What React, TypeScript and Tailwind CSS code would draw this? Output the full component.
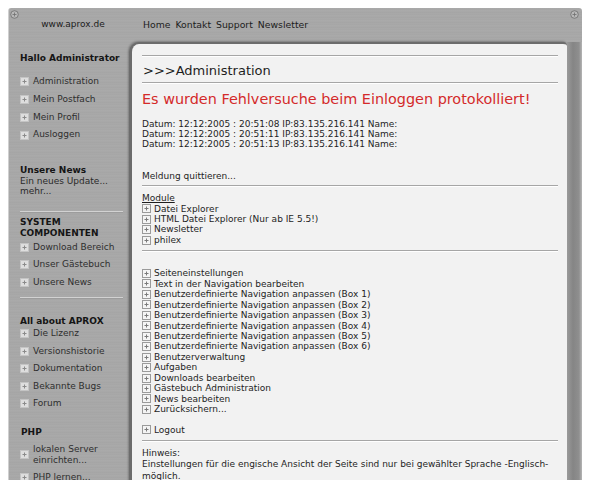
import React from 'react';

const metal =
  'bg-[repeating-linear-gradient(0deg,#a8a8a8_0px,#a3a3a3_1px,#adadad_2px,#a6a6a6_3px,#a9a9a9_5px)]';

function Plus({ side }: { side?: boolean }) {
  return (
    <svg width="9" height="9" viewBox="0 0 9 9" className="shrink-0">
      <rect
        x="0.5"
        y="0.5"
        width="8"
        height="8"
        fill={side ? '#dedede' : '#f4f4f4'}
        stroke={side ? '#c4c4c4' : '#9a9a9a'}
      />
      <path d="M4.5 2.5v4M2.5 4.5h4" stroke={side ? '#8a8a8a' : '#7a7a7a'} strokeWidth="1" />
    </svg>
  );
}

function Screw() {
  return (
    <svg width="9" height="9" viewBox="0 0 9 9">
      <circle cx="4.5" cy="4.5" r="3.8" fill="#b8b8b8" stroke="#6f6f6f" strokeWidth="0.8" />
      <path d="M4.5 2.5v4M2.5 4.5h4" stroke="#6f6f6f" strokeWidth="0.8" />
    </svg>
  );
}

function SideItem({ children, className }: { children: React.ReactNode; className?: string }) {
  return (
    <div className={`flex items-center gap-[4px] py-[3.25px] leading-[11px] text-[#2e2e2e] ${className ?? ''}`}>
      <Plus side />
      <span className="leading-[11px]">{children}</span>
    </div>
  );
}

function SideHead({ children, className }: { children: React.ReactNode; className?: string }) {
  return <div className={`font-bold leading-[11px] text-[#151515] ${className ?? ''}`}>{children}</div>;
}

function Sep({ className }: { className?: string }) {
  return <div className={`h-[2px] w-[103px] border-t border-[#d2d2d2] border-b border-b-[#9c9c9c] ${className ?? ''}`} />;
}

const adminLinks = [
  'Seiteneinstellungen',
  'Text in der Navigation bearbeiten',
  'Benutzerdefinierte Navigation anpassen (Box 1)',
  'Benutzerdefinierte Navigation anpassen (Box 2)',
  'Benutzerdefinierte Navigation anpassen (Box 3)',
  'Benutzerdefinierte Navigation anpassen (Box 4)',
  'Benutzerdefinierte Navigation anpassen (Box 5)',
  'Benutzerdefinierte Navigation anpassen (Box 6)',
  'Benutzerverwaltung',
  'Aufgaben',
  'Downloads bearbeiten',
  'Gästebuch Administration',
  'News bearbeiten',
  'Zurücksichern...',
];

const modules = ['Datei Explorer', 'HTML Datei Explorer (Nur ab IE 5.5!)', 'Newsletter', 'philex'];

function Row({ children }: { children: React.ReactNode }) {
  return (
    <div className="flex items-center gap-[3px] h-[10.46px] leading-[10.46px]">
      <Plus />
      <span>{children}</span>
    </div>
  );
}

function Hr({ className }: { className?: string }) {
  return <div className={`h-[2px] border-t border-[#a6a6a6] border-b border-b-[#ffffff] ${className ?? ''}`} />;
}

export default function App() {
  return (
    <div className="w-[590px] h-[480px] bg-white overflow-hidden pt-[8px] pl-[8px] font-['DejaVu_Sans','Verdana',sans-serif] text-[9px]">
      <div className={`relative w-[574px] h-[520px] rounded-tl-[3px] rounded-tr-[3px] border-l border-[#cfcfcf] ${metal} flex flex-col`}>
        {/* screws */}
        <div className="absolute left-[1px] top-[2px]">
          <Screw />
        </div>
        <div className="absolute right-[3px] top-[2px]">
          <Screw />
        </div>

        {/* Top bar */}
        <div className="h-[34px] flex items-center text-[#1c1c1c]">
          <div className="w-[124px] text-center pl-[4px]">www.aprox.de</div>
          <nav className="flex gap-[5px] pl-[10px] text-[9.3px]">
            <span>Home</span>
            <span>Kontakt</span>
            <span>Support</span>
            <span>Newsletter</span>
          </nav>
        </div>

        <div className="flex flex-1">
          {/* Sidebar */}
          <aside className="w-[120px] pl-[11px] pt-[10.5px] flex flex-col">
            <SideHead>Hallo Administrator</SideHead>
            <div className="mt-[9.65px]">
              {['Administration', 'Mein Postfach', 'Mein Profil', 'Ausloggen'].map((t) => (
                <div key={t} className="h-[17.7px] flex items-center gap-[4px] text-[#2e2e2e]">
                  <Plus side />
                  <span>{t}</span>
                </div>
              ))}
            </div>

            <SideHead className="mt-[21.5px]">Unsere News</SideHead>
            <div className="leading-[10px] text-[#2a2a2a]">Ein neues Update...</div>
            <div className="leading-[10px] text-[#2a2a2a]">mehr...</div>

            <Sep className="mt-[15px]" />

            <SideHead className="mt-[4px]">SYSTEM</SideHead>
            <SideHead>COMPONENTEN</SideHead>
            <SideItem className="-mt-[1px]">Download Bereich</SideItem>
            <SideItem>Unser Gästebuch</SideItem>
            <SideItem>Unsere News</SideItem>

            <Sep className="mt-[6px]" />

            <SideHead className="mt-[17px]">All about APROX</SideHead>
            <div className="-mt-[2px]">
              <SideItem>Die Lizenz</SideItem>
              <SideItem>Versionshistorie</SideItem>
              <SideItem>Dokumentation</SideItem>
              <SideItem>Bekannte Bugs</SideItem>
              <SideItem>Forum</SideItem>
            </div>

            <SideHead className="mt-[15px] pl-[1px]">PHP</SideHead>
            <SideItem className="mt-[2px]">
              lokalen Server
              <br />
              einrichten...
            </SideItem>
            <SideItem>PHP lernen...</SideItem>
          </aside>

          {/* Main panel */}
          <main className="w-[438px] bg-[#f2f2f2] rounded-tl-[10px] rounded-tr-[4px] border-l-[3px] border-t-[2px] border-[#6c6c6c] shadow-[-1px_-1px_2px_rgba(0,0,0,0.25)] pl-[10px] pr-[9px] pt-[11px] text-[#1e1e1e]">
            <Hr />
            <div className="text-[13px] leading-[16px] mt-[6px] pl-[1px]">&gt;&gt;&gt;Administration</div>
            <Hr className="mt-[3px]" />
            <div className="text-[14.4px] leading-[17px] mt-[7px] text-[#d42a2a] whitespace-nowrap">
              Es wurden Fehlversuche beim Einloggen protokolliert!
            </div>
            <div className="mt-[11px] leading-[10px]">
              <div>Datum: 12:12:2005 : 20:51:08 IP:83.135.216.141 Name:</div>
              <div>Datum: 12:12:2005 : 20:51:11 IP:83.135.216.141 Name:</div>
              <div>Datum: 12:12:2005 : 20:51:13 IP:83.135.216.141 Name:</div>
            </div>
            <div className="mt-[22px] leading-[10px]">Meldung quittieren...</div>
            <Hr className="mt-[4px]" />
            <div className="mt-[6px] leading-[10.5px] underline">Module</div>
            {modules.map((m) => (
              <Row key={m}>{m}</Row>
            ))}
            <Hr className="mt-[5px]" />
            <div className="mt-[16px]">
              {adminLinks.map((l) => (
                <Row key={l}>{l}</Row>
              ))}
            </div>
            <div className="mt-[10px]">
              <Row>Logout</Row>
            </div>
            <Hr className="mt-[5px]" />
            <div className="mt-[6px] leading-[11.3px]">
              <div>Hinweis:</div>
              <div>
                Einstellungen für die engische Ansicht der Seite sind nur bei gewählter Sprache -Englisch-
                <br />
                möglich.
              </div>
            </div>
          </main>

          {/* Right frame strip */}
          <div className="flex-1 bg-[linear-gradient(90deg,#9a9a9a,#858585_40%,#8f8f8f_80%,#b5b5b5)]" />
        </div>
      </div>
    </div>
  );
}
